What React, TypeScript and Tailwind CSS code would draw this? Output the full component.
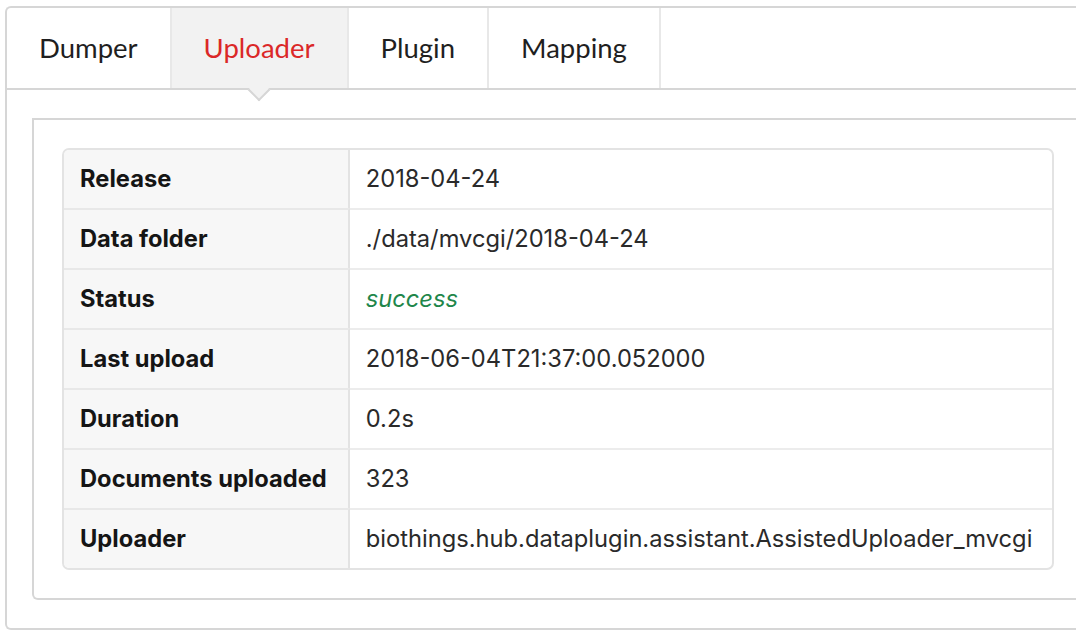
import React from "react";

const rows: { label: string; value: string; success?: boolean }[] = [
  { label: "Release", value: "2018-04-24" },
  { label: "Data folder", value: "./data/mvcgi/2018-04-24" },
  { label: "Status", value: "success", success: true },
  { label: "Last upload", value: "2018-06-04T21:37:00.052000" },
  { label: "Duration", value: "0.2s" },
  { label: "Documents uploaded", value: "323" },
  { label: "Uploader", value: "biothings.hub.dataplugin.assistant.AssistedUploader_mvcgi" },
];

const tabs = ["Dumper", "Uploader", "Plugin", "Mapping"];

export default function App() {
  return (
    <div
      className="w-[1076px] h-[644px] overflow-hidden bg-white"
      style={{ fontFamily: "Lato, 'Noto Sans', sans-serif" }}
    >
      <div className="pt-[6px] pl-[5px]">
        <div className="w-[1200px] border-2 border-r-0 border-[#d6d6d6] rounded-l-[6px]">
          <div className="flex h-[82px] border-b-2 border-[#d6d6d6]">
            {tabs.map((t) => {
              const active = t === "Uploader";
              return (
                <div
                  key={t}
                  className={`relative flex items-center px-8 text-[27.5px] border-r-2 border-[#e8e8e8] ${
                    active ? "bg-[#f2f2f2] text-[#db2828]" : "text-[#1f1f1f]"
                  }`}
                >
                  {t}
                  {active && (
                    <div className="absolute left-1/2 bottom-[-10px] w-[16px] h-[16px] -translate-x-1/2 rotate-45 bg-[#f2f2f2] border-r-2 border-b-2 border-[#d6d6d6]" />
                  )}
                </div>
              );
            })}
          </div>
          <div className="px-[25px] py-[28px]">
            <div className="border-2 border-r-0 border-[#d6d6d6] rounded-bl-[6px] px-[28px] py-[28px]">
              <div
                className="inline-grid grid-cols-[auto_auto] border-2 border-[#e3e3e3] rounded-[7px] overflow-hidden text-[23.7px]"
                style={{ fontFamily: "Inter, Lato, sans-serif" }}
              >
                {rows.map((r, i) => (
                  <React.Fragment key={r.label}>
                    <div
                      className={`flex items-center pl-4 pr-[21px] bg-[#f7f7f7] font-bold text-[#151515] border-r-2 border-[#e3e3e3] ${
                        i > 0 ? "border-t-2 border-t-[#e8e8e8] h-[60px]" : "h-[58px]"
                      }`}
                    >
                      {r.label}
                    </div>
                    <div
                      className={`flex items-center pl-4 pr-[20px] ${
                        i > 0 ? "border-t-2 border-[#ececec] h-[60px]" : "h-[58px]"
                      } ${r.success ? "italic text-[#21864a]" : "text-[#2a2a2a]"}`}
                    >
                      {r.value}
                    </div>
                  </React.Fragment>
                ))}
              </div>
            </div>
          </div>
        </div>
      </div>
    </div>
  );
}
